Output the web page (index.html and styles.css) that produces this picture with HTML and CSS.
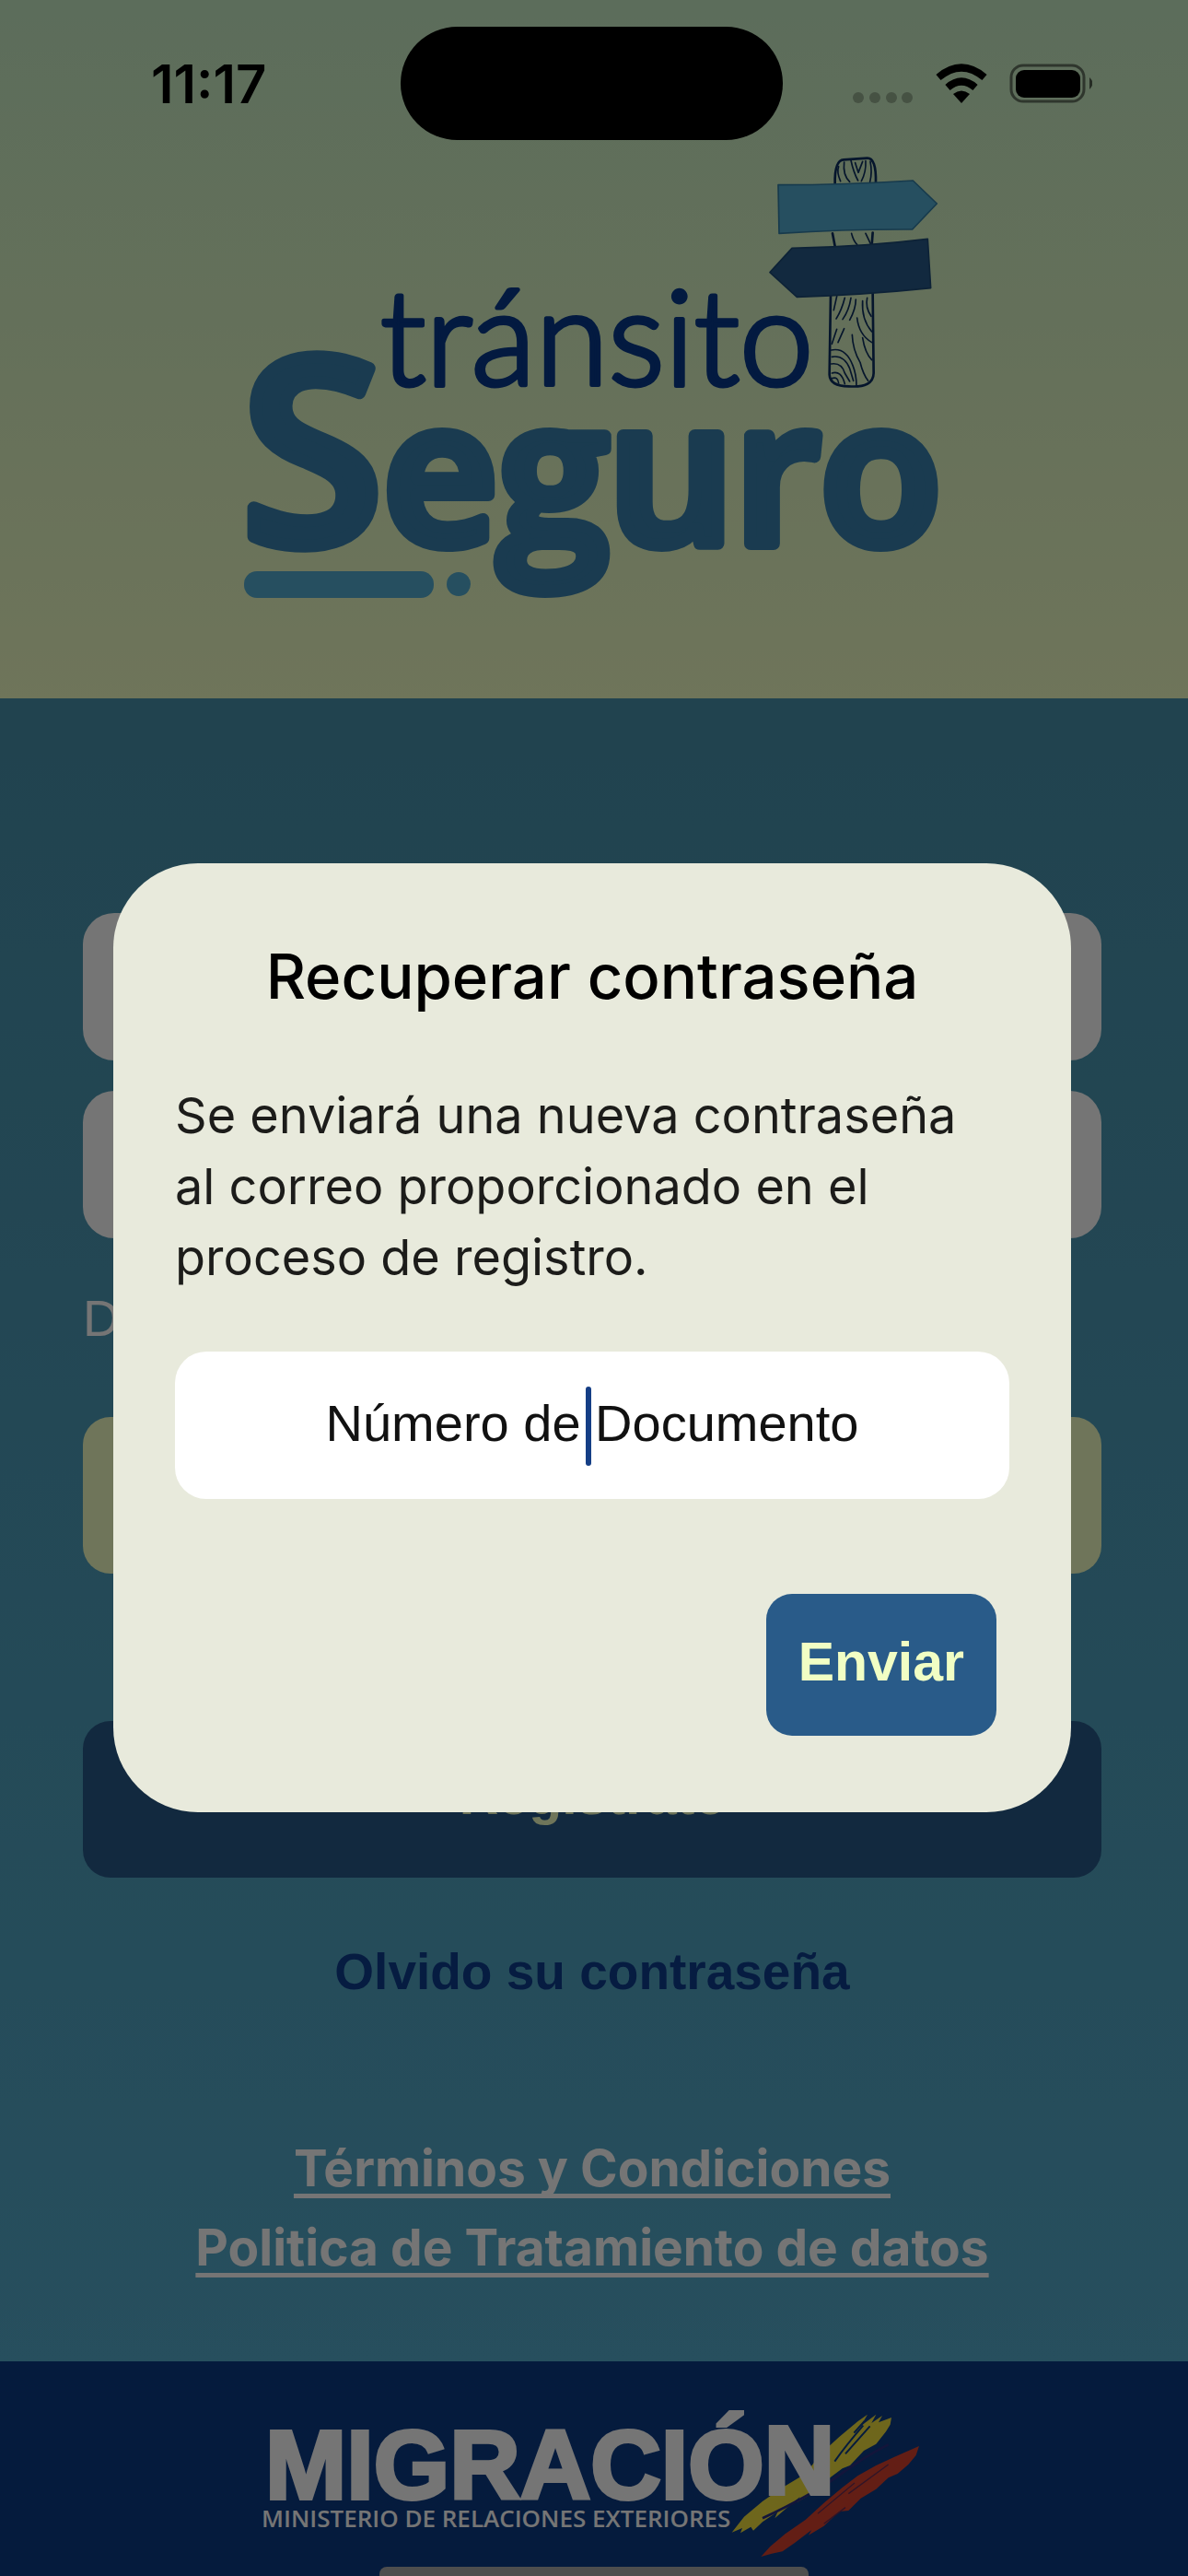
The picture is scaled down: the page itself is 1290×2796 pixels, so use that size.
FILE: index.html
```html
<!DOCTYPE html>
<html lang="es">
<head>
  <meta charset="UTF-8" />
  <meta name="viewport" content="width=device-width, initial-scale=1.0"/>
  <title>Tránsito Seguro - Recuperar contraseña</title>
  <link rel="stylesheet" href="styles.css">
</head>
<body>
  <div class="screen">
    <header class="header">
      <div class="status-bar">
        <span class="time">11:17</span>
        <div class="island"></div>
        <svg class="status-icons" viewBox="0 0 264 48" aria-hidden="true">
          <g opacity="0.25">
            <circle cx="10" cy="39" r="6"/>
            <circle cx="28" cy="39" r="6"/>
            <circle cx="46" cy="39" r="6"/>
            <circle cx="63" cy="39" r="6"/>
          </g>
          <g fill="none" stroke="#000" stroke-width="8">
            <path d="M97 17 Q122 -4 147 17"/>
            <path d="M107 28 Q122 15 137 28"/>
          </g>
          <path d="M113 35 Q122 28 131 35 L122 45 Z"/>
          <rect x="176" y="4" width="79" height="39" rx="13" fill="none" stroke="#000" stroke-width="3" opacity="0.5"/>
          <rect x="181" y="9" width="70" height="30" rx="9"/>
          <path d="M261 17 Q268 23 261 30 Z" opacity="0.6"/>
        </svg>
      </div>
      <svg class="logo" viewBox="255 160 780 510" role="img" aria-label="Tránsito Seguro">
        <!-- signpost -->
        <g transform="translate(780 150) scale(0.3333)" stroke-linejoin="round" stroke-linecap="round">
          <g fill="none" stroke="#0d2f60" stroke-width="8">
            <path d="M380 150 Q378 72 408 70 L485 65 Q515 64 513 145"/>
            <path d="M366 510 L362 770 Q364 808 425 808 Q505 814 506 765 L503 505"/>
            <path d="M372 310 L380 352 M503 308 L500 348"/>
          </g>
          <g fill="none" stroke="#0d2f60" stroke-width="5">
            <path d="M392 92 Q385 110 398 140 M410 78 Q405 120 428 142 M432 72 Q440 110 455 138 M446 80 L456 112 L470 76 M480 74 Q482 110 466 140 M495 76 Q502 110 494 142"/>
            <path d="M434 310 Q440 335 452 346 M480 310 L496 344"/>
            <path d="M412 520 Q402 560 384 588 M432 520 Q426 560 405 590 M448 525 Q448 555 428 592 M386 515 L376 560 M485 520 Q478 550 498 580 M470 530 Q466 590 500 630 M452 585 Q458 640 500 665 M436 640 Q438 690 462 730 Q472 770 488 790 M470 650 Q478 700 500 722"/>
            <path d="M386 622 L370 670 M410 620 L390 665 M368 690 Q415 680 438 740 Q450 770 450 806 M370 712 Q410 705 428 750 L440 790 M368 735 Q402 730 412 765 L428 792 M370 765 Q400 755 412 800 M370 782 Q390 775 392 798"/>
          </g>
          <path d="M195 152 Q420 152 634 138 L712 213 L632 297 Q420 296 198 310 Z" fill="#53acd1" stroke="#337fa6" stroke-width="5"/>
          <path d="M168 437 L240 358 Q470 354 682 328 L692 488 Q480 510 256 517 Z" fill="#295b89" stroke="#1d4a77" stroke-width="5"/>
        </g>
        <text class="logo-top" x="413" y="418">tránsito</text>
        <text class="logo-main" x="262" y="590"><tspan class="logo-initial">S</tspan>eguro</text>
        <rect x="265" y="620" width="206" height="29" rx="14" fill="#53acd1"/>
        <circle cx="498" cy="634" r="13" fill="#53acd1"/>
      </svg>
    </header>

    <main class="login">
      <form class="login-form">
        <input class="field" type="text" aria-label="Usuario">
        <input class="field" type="password" aria-label="Contraseña">
        <p class="hint">D</p>
        <button class="btn btn-light" type="button" aria-label="Ingresar"></button>
        <button class="btn btn-dark" type="button">Registrate</button>
      </form>
      <a class="forgot" href="#">Olvido su contraseña</a>
      <nav class="legal">
        <a href="#">Términos y Condiciones</a>
        <a href="#">Politica de Tratamiento de datos</a>
      </nav>
    </main>

    <footer class="footer">
      <svg class="migracion" viewBox="272 2600 750 186" role="img" aria-label="Migración, Ministerio de Relaciones Exteriores">
        <!-- brush strokes -->
        <g transform="translate(780 2600) scale(0.3333)">
          <path d="M50 446 L90 395 L150 345 L215 300 L290 255 L340 190 L400 135 L460 85 L492 62 L470 100 L520 62 L505 90 L540 66 L528 88 L570 72 L566 95 L552 118 L520 158 L480 180 L435 228 L410 238 L370 268 L310 320 L262 348 L272 330 L225 370 L190 400 L200 378 L150 412 L120 440 L112 428 L78 448 L84 432 Z" fill="#f0df3e"/>
          <path d="M385 215 Q420 165 478 98 M420 190 L500 100 M448 122 L482 84" fill="none" stroke="#0d3b85" stroke-width="6"/>
          <path d="M150 400 Q300 330 400 260 Q480 200 560 160" fill="none" stroke="#2b2f80" stroke-width="8"/>
          <path d="M145 525 L175 492 L225 450 L290 405 L350 350 L410 300 L460 262 L520 228 L580 200 L660 165 L650 195 L625 225 L590 255 L560 268 L520 305 L470 335 L430 375 L400 378 L350 425 L300 455 L310 438 L255 480 L215 508 L180 515 Z" fill="#d8432f"/>
          <path d="M330 385 L450 285 M430 320 L560 225 M350 418 L420 365" fill="none" stroke="#6b2d55" stroke-width="4"/>
        </g>
        <text class="mig-name" x="290" y="2712">MIGRACIÓ<tspan dy="-5">N</tspan></text>
        <text class="mig-sub" x="286" y="2743">MINISTERIO DE RELACIONES EXTERIORES</text>
      </svg>
      <div class="home-indicator"></div>
    </footer>
  </div>

  <div class="overlay">
    <form class="modal" role="dialog" aria-labelledby="modalTitle">
      <h2 class="modal-title" id="modalTitle">Recuperar contraseña</h2>
      <p class="modal-text">Se enviará una nueva contraseña al correo proporcionado en el proceso de registro.</p>
      <div class="modal-input">
        <input type="text" placeholder="Número de Documento" aria-label="Número de Documento">
        <span class="caret"></span>
      </div>
      <button class="send-btn" type="button">Enviar</button>
    </form>
  </div>
</body>
</html>
```
FILE: styles.css
```css
* { margin: 0; padding: 0; box-sizing: border-box; }
body {
  font-family: "Liberation Sans", Arial, sans-serif;
  font-size: 55px;
  line-height: 64px;
}
button, input { font: inherit; border: none; outline: none; }

.screen {
  min-height: 100vh;
  display: flex;
  flex-direction: column;
}

.header {
  display: flex;
  flex-direction: column;
  align-items: center;
  background: linear-gradient(#c8edc6, #f1fec4);
  padding-bottom: 88px;
}
.status-bar {
  width: 100%;
  display: grid;
  grid-template-columns: 1fr 415px 1fr;
  align-items: center;
  padding: 29px 104px 8px 98px;
}
.time {
  font-family: Inter, sans-serif;
  font-size: 58px;
  font-weight: 600;
  padding-left: 66px;
}
.island {
  height: 123px;
  border-radius: 62px;
  background: #000;
}
.status-icons { width: 264px; justify-self: end; }
.logo { width: 780px; height: 510px; }
.logo-top {
  font-family: Lato, sans-serif;
  font-size: 144px;
  font-weight: 300;
  fill: #07398c;
  stroke: #07398c;
  stroke-width: 5px;
  stroke-linejoin: round;
}
.logo-main {
  font-family: "Open Sans", sans-serif;
  font-size: 216px;
  font-weight: 600;
  fill: #3982ae;
  stroke: #3982ae;
  stroke-width: 14px;
  stroke-linejoin: round;
}
.logo-initial { font-size: 280px; }

.login {
  flex: 1;
  display: flex;
  flex-direction: column;
  align-items: center;
  background: linear-gradient(#4892ac, #55accc);
  padding: 233px 94px 80px 90px;
}
.login-form {
  width: 100%;
  display: flex;
  flex-direction: column;
}
.field {
  width: 100%;
  height: 160px;
  border-radius: 34px;
  background: #fff;
  padding: 0 40px;
  margin-bottom: 33px;
}
.hint {
  color: #fff;
  margin: 22px 0 75px;
}
.btn {
  width: 100%;
  height: 170px;
  border-radius: 30px;
  font-size: 59px;
  font-weight: 700;
  padding-bottom: 8px;
}
.btn-light { background: #f1fec4; }
.btn-dark {
  background: #295b89;
  color: #f1fec4;
  margin-top: 160px;
}
.forgot {
  color: #0f3d8f;
  font-weight: 700;
  text-decoration: none;
  margin-top: 70px;
}
.legal {
  display: flex;
  flex-direction: column;
  align-items: center;
  margin-top: 138px;
  font-family: Inter, sans-serif;
  font-weight: 700;
  line-height: 86px;
}
.legal a {
  color: #fff;
  text-decoration-thickness: 5px;
  text-underline-offset: 8px;
  text-decoration-skip-ink: none;
}

.footer {
  display: flex;
  flex-direction: column;
  align-items: center;
  background: #0d3b85;
  padding-top: 37px;
}
.migracion { width: 750px; height: 186px; }
.mig-name {
  font-size: 106px;
  font-weight: 700;
  fill: #fff;
  stroke: #fff;
  stroke-width: 4px;
}
.mig-sub {
  font-family: "Open Sans", sans-serif;
  font-size: 26px;
  font-weight: 600;
  fill: #fff;
}
.home-indicator {
  width: 466px;
  height: 10px;
  border-radius: 8px 8px 0 0;
  background: #aaa;
}

.overlay {
  position: fixed;
  inset: 0;
  display: flex;
  align-items: center;
  justify-content: center;
  background: rgba(0, 0, 0, 0.54);
  padding: 108px 127px 0 123px;
}
.modal {
  width: 100%;
  display: flex;
  flex-direction: column;
  background: #e8eadc;
  border-radius: 92px;
  padding: 83px 67px;
}
.modal-title {
  font-family: Inter, sans-serif;
  font-size: 67px;
  font-weight: 500;
  line-height: 80px;
  text-align: center;
}
.modal-text {
  font-family: Inter, sans-serif;
  font-size: 54px;
  line-height: 77px;
  color: #1c1c1a;
  margin: 72px 0 64px;
}
.modal-input { position: relative; }
.modal-input input {
  display: block;
  width: 100%;
  height: 160px;
  border-radius: 34px;
  background: #fff;
  font-size: 56px;
  text-align: center;
  padding-bottom: 6px;
}
.modal-input input::placeholder { color: #111; opacity: 1; }
.caret {
  position: absolute;
  top: 38px;
  left: calc(50% - 7px);
  width: 6px;
  height: 86px;
  border-radius: 3px;
  background: #153e85;
}
.send-btn {
  align-self: flex-end;
  height: 154px;
  border-radius: 28px;
  background: #295b89;
  color: #f1fec4;
  font-size: 59px;
  font-weight: 700;
  padding: 0 35px 6px;
  margin: 103px 14px 0 0;
}
```
